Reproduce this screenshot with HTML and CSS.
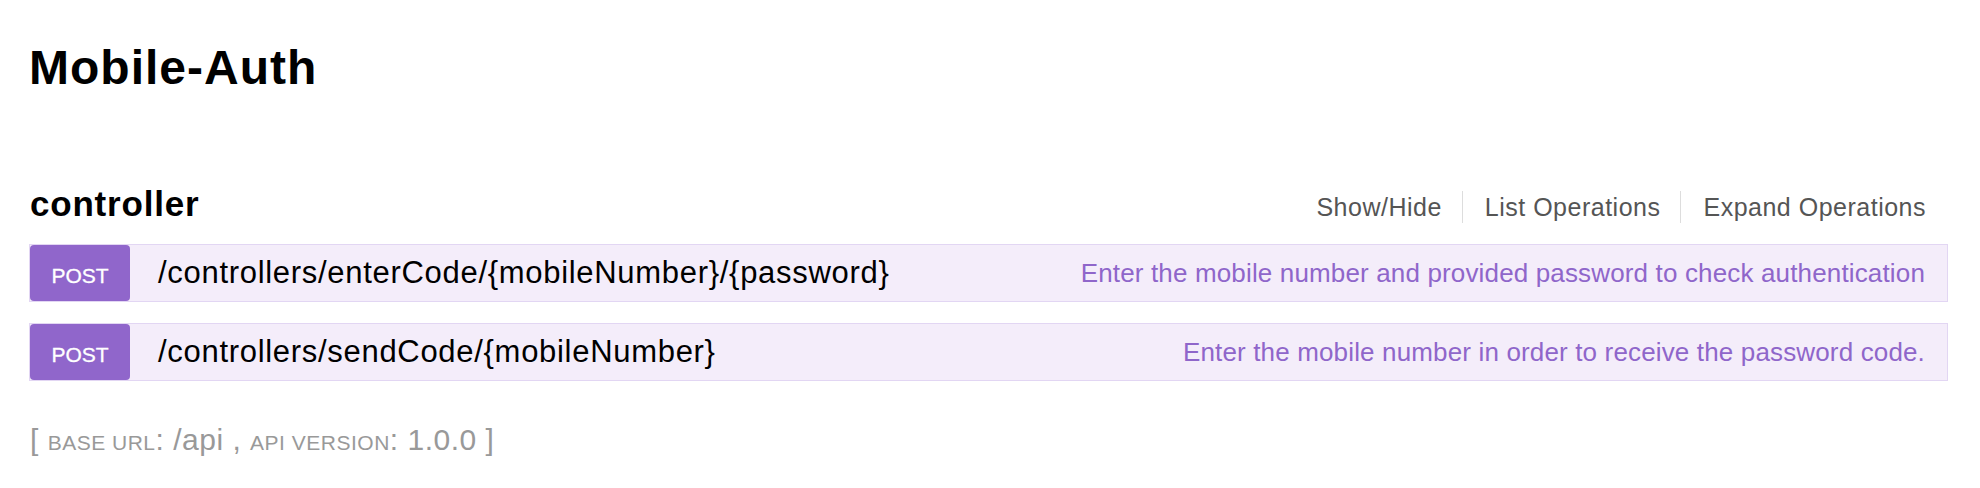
FILE: index.html
```html
<!DOCTYPE html>
<html lang="en">
<head>
<meta charset="utf-8">
<title>Mobile-Auth</title>
<link rel="stylesheet" href="styles.css">
</head>
<body>
<div class="page">
  <h1 class="title">Mobile-Auth</h1>
  <div class="resource">
    <div class="heading">
      <h2 class="res-name">controller</h2>
      <ul class="options">
        <li><a href="#">Show/Hide</a></li>
        <li><a href="#">List Operations</a></li>
        <li><a href="#">Expand Operations</a></li>
      </ul>
    </div>
    <ul class="endpoints">
      <li class="op">
        <span class="method">POST</span>
        <span class="path">/controllers/enterCode/{mobileNumber}/{password}</span>
        <span class="desc">Enter the mobile number and provided password to check authentication</span>
      </li>
      <li class="op">
        <span class="method">POST</span>
        <span class="path">/controllers/sendCode/{mobileNumber}</span>
        <span class="desc">Enter the mobile number in order to receive the password code.</span>
      </li>
    </ul>
  </div>
  <div class="footer">[ <span class="sc">BASE URL</span>: /api , <span class="sc">API VERSION</span>: 1.0.0 ]</div>
</div>
</body>
</html>
```
FILE: styles.css
```css
html, body {
  margin: 0;
  padding: 0;
  background: #fff;
}
body {
  font-family: "Liberation Sans", Arial, sans-serif;
  color: #000;
}
.page {
  padding: 0 32px 0 29px;
}
.title {
  margin: 44px 0 0 0;
  font-size: 48px;
  line-height: 48px;
  font-weight: bold;
  letter-spacing: 1px;
}
.heading {
  margin-top: 92px;
  display: flex;
  align-items: baseline;
  justify-content: space-between;
}
.res-name {
  margin: 0;
  font-size: 35px;
  line-height: 40px;
  font-weight: bold;
  letter-spacing: 0.8px;
  padding-left: 1px;
}
.options {
  list-style: none;
  margin: 0;
  padding: 0 22px 0 0;
  display: flex;
  align-items: baseline;
}
.options li {
  font-size: 25px;
  line-height: 32px;
  padding: 0 20px 0 22px;
  border-left: 1px solid #dddddd;
}
.options li:first-child {
  border-left: none;
  padding-left: 0;
}
.options li:last-child {
  padding-right: 0;
}
.options a {
  color: #555555;
  text-decoration: none;
  letter-spacing: 0.5px;
}
.endpoints {
  list-style: none;
  margin: 20px 0 0 0;
  padding: 0;
  display: flex;
  flex-direction: column;
  gap: 21px;
}
.op {
  display: flex;
  align-items: center;
  height: 58px;
  box-sizing: border-box;
  border: 1px solid #e2d6f3;
  background: #f4edfa;
  padding-right: 22px;
}
.method {
  width: 100px;
  height: 56px;
  box-sizing: border-box;
  padding-top: 6px;
  display: flex;
  align-items: center;
  justify-content: center;
  background: #9066cb;
  color: #fff;
  border-radius: 4px;
  font-size: 21px;
  line-height: 24px;
  -webkit-text-stroke: 0.3px #fff;
}
.path {
  margin-left: 28px;
  font-size: 31px;
  line-height: 34px;
  letter-spacing: 0.7px;
  color: #000;
}
.desc {
  margin-left: auto;
  font-size: 26px;
  line-height: 30px;
  letter-spacing: 0.15px;
  color: #8f66ca;
}
.footer {
  margin-top: 41px;
  padding-left: 1px;
  font-size: 30px;
  line-height: 36px;
  color: #999999;
  letter-spacing: 0.5px;
}
.sc {
  font-size: 21px;
}
```
